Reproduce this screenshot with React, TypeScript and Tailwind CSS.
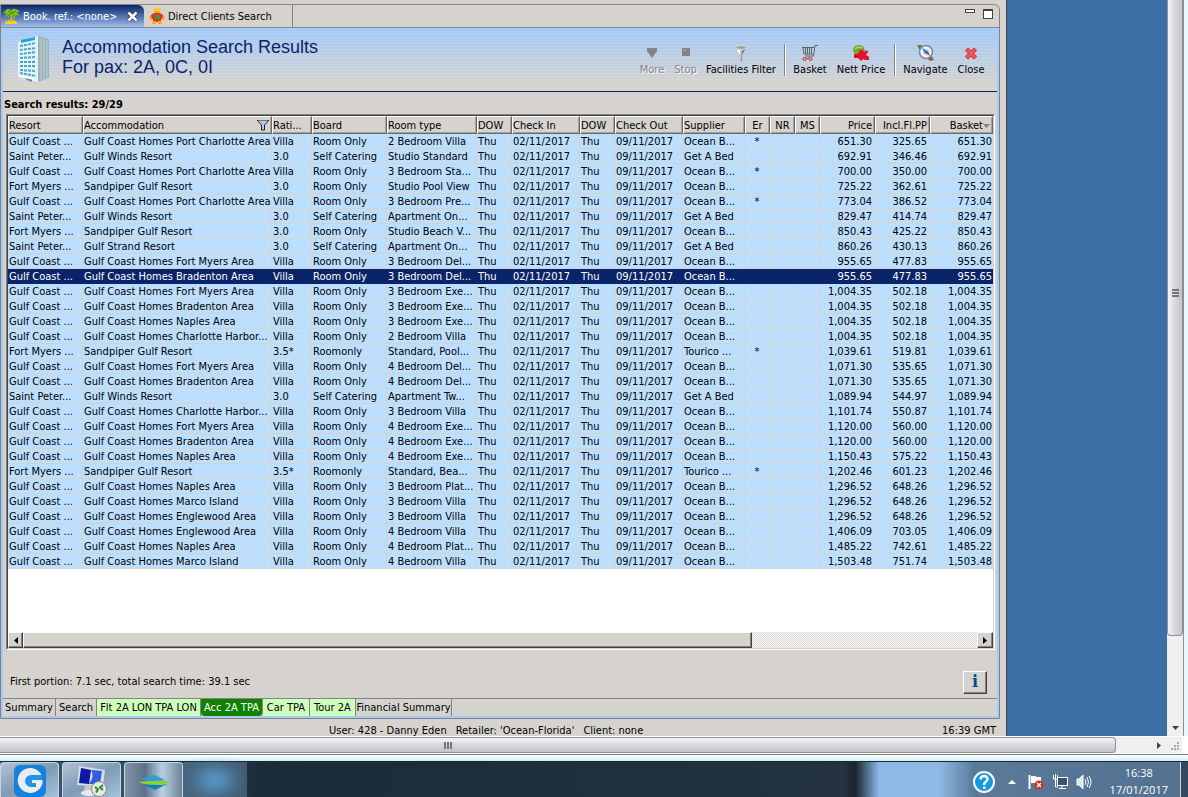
import { useState } from "react";

const columns = [
  { label: "Resort", width: 75, align: "left" },
  { label: "Accommodation", width: 189, align: "left" },
  { label: "Rati...", width: 40, align: "left" },
  { label: "Board", width: 75, align: "left" },
  { label: "Room type", width: 90, align: "left" },
  { label: "DOW", width: 35, align: "left" },
  { label: "Check In", width: 68, align: "left" },
  { label: "DOW", width: 35, align: "left" },
  { label: "Check Out", width: 68, align: "left" },
  { label: "Supplier", width: 62, align: "left" },
  { label: "Er", width: 25, align: "center" },
  { label: "NR", width: 25, align: "center" },
  { label: "MS", width: 25, align: "center" },
  { label: "Price", width: 55, align: "right" },
  { label: "Incl.Fl.PP", width: 55, align: "right" },
  { label: "Basket", width: 63, align: "right" },
];

const GC = "Gulf Coast ...";
const SP = "Saint Peter...";
const FM = "Fort Myers ...";
const RO = "Room Only";
const SC = "Self Catering";
const OB = "Ocean B...";
const GB = "Get A Bed";
const TO = "Tourico ...";

// resort, accommodation, rating, board, room, supplier, er, price, per person
const results = [
  [GC, "Gulf Coast Homes Port Charlotte Area", "Villa", RO, "2 Bedroom Villa", OB, "*", "651.30", "325.65"],
  [SP, "Gulf Winds Resort", "3.0", SC, "Studio Standard", GB, "", "692.91", "346.46"],
  [GC, "Gulf Coast Homes Port Charlotte Area", "Villa", RO, "3 Bedroom Sta...", OB, "*", "700.00", "350.00"],
  [FM, "Sandpiper Gulf Resort", "3.0", RO, "Studio Pool View", OB, "", "725.22", "362.61"],
  [GC, "Gulf Coast Homes Port Charlotte Area", "Villa", RO, "3 Bedroom Pre...", OB, "*", "773.04", "386.52"],
  [SP, "Gulf Winds Resort", "3.0", SC, "Apartment On...", GB, "", "829.47", "414.74"],
  [FM, "Sandpiper Gulf Resort", "3.0", RO, "Studio Beach V...", OB, "", "850.43", "425.22"],
  [SP, "Gulf Strand Resort", "3.0", SC, "Apartment On...", GB, "", "860.26", "430.13"],
  [GC, "Gulf Coast Homes Fort Myers Area", "Villa", RO, "3 Bedroom Del...", OB, "", "955.65", "477.83"],
  [GC, "Gulf Coast Homes Bradenton Area", "Villa", RO, "3 Bedroom Del...", OB, "", "955.65", "477.83"],
  [GC, "Gulf Coast Homes Fort Myers Area", "Villa", RO, "3 Bedroom Exe...", OB, "", "1,004.35", "502.18"],
  [GC, "Gulf Coast Homes Bradenton Area", "Villa", RO, "3 Bedroom Exe...", OB, "", "1,004.35", "502.18"],
  [GC, "Gulf Coast Homes Naples Area", "Villa", RO, "3 Bedroom Exe...", OB, "", "1,004.35", "502.18"],
  [GC, "Gulf Coast Homes Charlotte Harbor...", "Villa", RO, "2 Bedroom Villa", OB, "", "1,004.35", "502.18"],
  [FM, "Sandpiper Gulf Resort", "3.5*", "Roomonly", "Standard, Pool...", TO, "*", "1,039.61", "519.81"],
  [GC, "Gulf Coast Homes Fort Myers Area", "Villa", RO, "4 Bedroom Del...", OB, "", "1,071.30", "535.65"],
  [GC, "Gulf Coast Homes Bradenton Area", "Villa", RO, "4 Bedroom Del...", OB, "", "1,071.30", "535.65"],
  [SP, "Gulf Winds Resort", "3.0", SC, "Apartment Tw...", GB, "", "1,089.94", "544.97"],
  [GC, "Gulf Coast Homes Charlotte Harbor...", "Villa", RO, "3 Bedroom Villa", OB, "", "1,101.74", "550.87"],
  [GC, "Gulf Coast Homes Fort Myers Area", "Villa", RO, "4 Bedroom Exe...", OB, "", "1,120.00", "560.00"],
  [GC, "Gulf Coast Homes Bradenton Area", "Villa", RO, "4 Bedroom Exe...", OB, "", "1,120.00", "560.00"],
  [GC, "Gulf Coast Homes Naples Area", "Villa", RO, "4 Bedroom Exe...", OB, "", "1,150.43", "575.22"],
  [FM, "Sandpiper Gulf Resort", "3.5*", "Roomonly", "Standard, Bea...", TO, "*", "1,202.46", "601.23"],
  [GC, "Gulf Coast Homes Naples Area", "Villa", RO, "3 Bedroom Plat...", OB, "", "1,296.52", "648.26"],
  [GC, "Gulf Coast Homes Marco Island", "Villa", RO, "3 Bedroom Villa", OB, "", "1,296.52", "648.26"],
  [GC, "Gulf Coast Homes Englewood Area", "Villa", RO, "3 Bedroom Villa", OB, "", "1,296.52", "648.26"],
  [GC, "Gulf Coast Homes Englewood Area", "Villa", RO, "4 Bedroom Villa", OB, "", "1,406.09", "703.05"],
  [GC, "Gulf Coast Homes Naples Area", "Villa", RO, "4 Bedroom Plat...", OB, "", "1,485.22", "742.61"],
  [GC, "Gulf Coast Homes Marco Island", "Villa", RO, "4 Bedroom Villa", OB, "", "1,503.48", "751.74"],
];

const alignClass: Record<string, string> = {
  left: "text-left pl-px",
  center: "text-center",
  right: "text-right pr-[2px]",
};

const raised =
  "border border-t-white border-l-white border-b-[#404040] border-r-[#404040] shadow-[inset_-1px_-1px_0_#848284] bg-[#d6d3ce]";

const PalmIcon = () => (
  <svg width="16" height="16" viewBox="0 0 16 16" className="shrink-0">
    <path d="M1 14q6-4 12 0v2H1z" fill="#f5d21f" />
    <path d="M7 5h2l-1 4 1 5H6l1-5z" fill="#e8b020" />
    <path d="M7 3Q5-1 2 2 0 3 0 6l3-1-2 4 4-2-1 4 4-5 2 5 2-2 0-2 3 1-2-4h3Q14 1 11 1 8 0 7 3z" fill="#7cc21a" />
    <path d="M8 5L4 3M8 5L4 8M8 5l4-2M8 5l4 4" stroke="#3f8f12" />
  </svg>
);

const ClientIcon = () => (
  <svg width="16" height="16" viewBox="0 0 16 16" className="shrink-0">
    <path d="M5 0h6l1 3H4z" fill="#f7d117" />
    <path d="M5 3h6v3H5z" fill="#ffa03c" />
    <path d="M2 7l3-2h6l3 2 1 4h-3v3H4v-3H1z" fill="#e8301c" />
    <path d="M0 9h3v3H1zM13 9h3l-1 3h-2zM4 13h3v3H3zM9 13h3l1 3H9z" fill="#f5a81a" />
    <path d="M6 7h5v4H6z" fill="#2aa43a" />
  </svg>
);

const BuildingIcon = () => (
  <svg width="36" height="48" viewBox="0 0 36 48" className="shrink-0">
    <path d="M3 7L23 1v46L3 42z" fill="#e8f2f6" />
    <path d="M23 1l11 3v39l-11 4z" fill="#9bb3ba" />
    <path d="M26 3v42M29 4v40M32 5v38" stroke="#c0d2d7" />
    <path d="M6 5l14-3v3L6 8z" fill="#21a5dc" />
    <path
      d="M5 11l16-3M5 15l16-2M5 19l16-2M5 23l16-1M5 27h16M5 31h16M5 35l16 1M5 38l16 3"
      stroke="#42a7cf"
      strokeWidth="2"
      strokeDasharray="3 1"
    />
    <path d="M8 41l9 2v4l-5-2z" fill="#768b94" />
    <path d="M6 40l13 3v2L6 42z" fill="#fff" />
  </svg>
);

const FunnelIcon = () => (
  <svg width="16" height="16" viewBox="0 0 16 16">
    <path d="M2 2l5 8v6h3v-6l4-8z" fill="#c4c4c4" />
    <path d="M9 5l4-2-4 7v6H8z" fill="#848484" />
    <ellipse cx="8" cy="2.500" rx="5.500" ry="2" fill="#a4a4a4" stroke="#dedede" />
    <path d="M4 5l3 5V5z" fill="#fff" />
  </svg>
);

const CartIcon = () => (
  <svg width="16" height="16" viewBox="0 0 16 16" fill="none">
    <path d="M16 .5h-3L11.500 11H3M0 2.500h12M1 3l1 6h10M3.500 3v6M5.500 3v6M7.500 3v6M9.500 3v6" stroke="#5f6468" />
    <circle cx="2.500" cy="14" r="1.500" stroke="#e01b24" />
    <circle cx="8.500" cy="14" r="1.500" stroke="#e01b24" />
    <path d="M4 12.500l1 1.500 2-1.500" stroke="#e01b24" />
  </svg>
);

const NettIcon = () => (
  <svg width="16" height="16" viewBox="0 0 16 16">
    <path d="M0 6Q0 0 6 0q5 0 6 6l-4 3H2z" fill="#74a52c" />
    <path d="M2 4q3-3 7-1" stroke="#b4d678" strokeWidth="1.500" fill="none" />
    <path d="M1 9h4l2-4h3l1 2 3-2 1 2-2 3 3 2v3h-4l-2-1-2 2-3-3H1z" fill="#e3122d" />
    <path d="M2 11h3v1H2z" fill="#901" />
  </svg>
);

const CompassIcon = () => (
  <svg width="17" height="17" viewBox="0 0 17 17">
    <path d="M0 1h4l4 3-4 4-2-3zM10 14l4-3 3 5-4 1z" fill="#86694a" />
    <circle cx="9" cy="8" r="6.500" fill="#dcebf4" stroke="#6d8da3" strokeWidth="1.500" />
    <circle cx="9" cy="8" r="4.500" fill="none" stroke="#fff" />
    <path d="M5 4l6 3-3 3z" fill="#1c8ad0" />
    <path d="M13 12L8 9l3-2z" fill="#dc2b2b" />
  </svg>
);

const CloseIcon = () => (
  <svg width="14" height="16" viewBox="0 0 14 16">
    <path d="M2.500 4l9 9M11.500 4l-9 9" stroke="#c0303a" strokeWidth="4.500" />
    <path d="M3 4.500l8 8M11 4.500l-8 8" stroke="#f0545c" strokeWidth="3" />
  </svg>
);

const MoreIcon = () => (
  <svg width="16" height="16" viewBox="0 0 16 16">
    <path d="M3 3h10v3l-5 7-5-7z" fill="#848284" />
  </svg>
);

const StopIcon = () => (
  <svg width="16" height="16" viewBox="0 0 16 16">
    <path d="M4 3h8v8H4z" fill="#848284" />
    <path d="M6 5.500h2" stroke="#bbb" />
  </svg>
);

type ToolProps = { label: string; icon: React.ReactNode; className: string; disabled?: boolean };

const ToolButton = ({ label, icon, className, disabled }: ToolProps) => (
  <button
    disabled={disabled}
    className={`flex flex-col items-center whitespace-nowrap ${className} ${
      disabled ? "text-[#848284] [text-shadow:1px_1px_0_#fff]" : "text-black"
    }`}
  >
    <span className="h-[17px] flex items-center">{icon}</span>
    <span className="leading-[18px]">{label}</span>
  </button>
);

const Separator = () => <div className="w-[2px] h-8 bg-[#848284] border-r border-white" />;

const TitleTabs = () => (
  <div className="flex h-[23px] border-b border-[#848284] rounded-tr-md">
    <button className="flex items-center w-[143px] pl-[3px] text-white rounded-tr-md bg-linear-to-b from-[#0a246a] to-[#a0c0f0]">
      <PalmIcon />
      <span className="ml-[3px] pt-[2px] whitespace-nowrap">Book. ref.: &lt;none&gt;</span>
      <svg width="11" height="11" viewBox="0 0 11 11" className="ml-auto mr-[6px]">
        <path d="M1.500 1.500l8 8M9.500 1.500l-8 8" stroke="#333" strokeWidth="4" />
        <path d="M1.500 1.500l8 8M9.500 1.500l-8 8" stroke="#fff" strokeWidth="2.500" />
      </svg>
    </button>
    <button className="flex items-center w-[149px] pl-[5px] border-r border-[#848284]">
      <ClientIcon />
      <span className="ml-[3px] pt-[2px] whitespace-nowrap">Direct Clients Search</span>
    </button>
    <div className="ml-auto mr-[6px] mt-1 flex gap-2 items-start">
      <button aria-label="Minimize" className="w-[10px] h-1 border border-[#404040] bg-white" />
      <button aria-label="Maximize" className="w-[10px] h-[10px] border border-t-2 border-[#404040] bg-white" />
    </div>
  </div>
);

const PageHeader = () => (
  <header className="flex h-16 border-b border-[#0a246a] bg-[repeating-linear-gradient(180deg,rgba(255,255,255,0.1)_0_1px,transparent_1px_3px),linear-gradient(180deg,#a3c9f9,#d6d3ce_92%)]">
    <div className="pl-3 pt-[7px]">
      <BuildingIcon />
    </div>
    <h1 className="ml-[11px] mt-[9px] text-[18px] leading-5 text-[#0a246a] font-[Liberation_Sans,sans-serif] whitespace-nowrap">
      Accommodation Search Results
      <br />
      For pax: 2A, 0C, 0I
    </h1>
    <div className="ml-auto mr-[7px] mt-4 flex items-start">
      <ToolButton label="More" icon={<MoreIcon />} className="w-[34px]" disabled />
      <ToolButton label="Stop" icon={<StopIcon />} className="w-[33px]" disabled />
      <ToolButton label="Facilities Filter" icon={<FunnelIcon />} className="w-[78px] mr-1" />
      <Separator />
      <ToolButton label="Basket" icon={<CartIcon />} className="w-[42px] ml-[3px]" />
      <ToolButton label="Nett Price" icon={<NettIcon />} className="w-[60px] mr-[3px]" />
      <Separator />
      <ToolButton label="Navigate" icon={<CompassIcon />} className="w-[53px] ml-[3px]" />
      <ToolButton label="Close" icon={<CloseIcon />} className="w-[38px]" />
    </div>
  </header>
);

const ResultsTable = () => {
  const [selected, setSelected] = useState(9);

  return (
    <table className="w-full table-fixed border-separate border-spacing-0">
      <colgroup>
        {columns.map((col, i) => (
          <col key={i} style={{ width: col.width }} />
        ))}
      </colgroup>
      <thead>
        <tr>
          {columns.map((col, i) => (
            <th
              key={i}
              className={`h-[18px] p-0 pt-[2px] font-normal leading-[14px] whitespace-nowrap overflow-hidden bg-[#d6d3ce] border border-t-white border-l-white border-r-[#6b6966] border-b-[#6b6966] shadow-[inset_-1px_-1px_0_#a5a29d] ${
                col.align === "left" ? "text-left" : col.align === "center" ? "text-center" : "text-right pr-[2px]"
              }`}
            >
              {col.label === "Accommodation" ? (
                <span className="flex items-center justify-between">
                  {col.label}
                  <svg width="14" height="12" viewBox="0 0 14 12" className="mr-px">
                    <path d="M1 0h12L8.500 5v5h-3V5z" fill="#b9c8ea" stroke="#222" />
                  </svg>
                </span>
              ) : col.label === "Basket" ? (
                <span className="flex items-center justify-end">
                  {col.label}
                  <svg width="7" height="4" viewBox="0 0 7 4">
                    <path d="M0 0h7L3.500 4z" fill="#848284" />
                  </svg>
                </span>
              ) : (
                col.label
              )}
            </th>
          ))}
        </tr>
      </thead>
      <tbody>
        {results.map(([resort, name, rating, board, room, supplier, er, price, pp], row) => (
          <tr
            key={row}
            onClick={() => setSelected(row)}
            className={row === selected ? "bg-[#0a246a] text-white" : "bg-[#bddfff] text-black"}
          >
            {[resort, name, rating, board, room, "Thu", "02/11/2017", "Thu", "09/11/2017", supplier, er, "", "", price, pp, price].map(
              (cell, i) => (
                <td
                  key={i}
                  className={`h-[15px] p-0 pt-[2px] leading-3 whitespace-nowrap overflow-hidden border-b border-r ${
                    row === selected ? "border-[#0a246a]" : "border-[#d6d3ce]"
                  } ${i === 15 ? "text-right pr-px border-r-0" : alignClass[columns[i].align]}`}
                >
                  {cell}
                </td>
              )
            )}
          </tr>
        ))}
      </tbody>
    </table>
  );
};

const TableScrollbar = () => (
  <div className="flex h-4 bg-[repeating-conic-gradient(#fff_0_25%,#d6d3ce_0_50%)] bg-size-[2px_2px]">
    <button aria-label="Scroll left" className={`w-[15px] flex items-center justify-center ${raised}`}>
      <svg width="4" height="7" viewBox="0 0 4 7">
        <path d="M4 0v7L0 3.500z" />
      </svg>
    </button>
    <div className={`w-[74%] ${raised}`} />
    <button aria-label="Scroll right" className={`ml-auto w-4 flex items-center justify-center ${raised}`}>
      <svg width="4" height="7" viewBox="0 0 4 7">
        <path d="M0 0v7l4-3.500z" />
      </svg>
    </button>
  </div>
);

const bottomTabs = [
  { label: "Summary", className: "w-[53px]" },
  { label: "Search", className: "w-[41px]" },
  { label: "Flt 2A LON TPA LON", className: "w-[104px] bg-[#ceffbd]" },
  { label: "Acc 2A TPA", className: "w-[62px] bg-[#108200] text-white rounded-b-sm" },
  { label: "Car TPA", className: "w-[47px] bg-[#ceffbd]" },
  { label: "Tour 2A", className: "w-[46px] bg-[#ceffbd]" },
  { label: "Financial Summary", className: "w-[96px]" },
];

const BookingWindow = () => (
  <div className="flex-1 min-w-0 flex flex-col bg-[#d6d3ce] border-r border-[#404040] pt-1 pr-[6px]">
    <div className="flex-1 min-h-0 flex flex-col border border-[#848284] rounded-tr-md">
      <TitleTabs />
      <div className="flex-1 flex flex-col border-x-2 border-b-2 border-[#a5cbf7]">
        <PageHeader />
        <h2 className="h-[22px] pt-[5px] pl-px font-bold leading-4">Search results: 29/29</h2>
        <div className="ml-[3px] mr-[2px] border border-t-[#848284] border-l-[#848284] border-white">
          <div className="h-[534px] flex flex-col justify-between border border-t-[#404040] border-l-[#404040] border-[#d6d3ce] bg-white">
            <ResultsTable />
            <TableScrollbar />
          </div>
        </div>
        <div className="flex-1 flex items-center justify-between pl-[7px] pr-[10px] pt-4">
          <p>First portion: 7.1 sec, total search time: 39.1 sec</p>
          <button
            aria-label="Information"
            className={`w-6 h-[23px] text-[16px] leading-5 font-bold text-[#004a94] font-[DejaVu_Serif,serif] ${raised}`}
          >
            i
          </button>
        </div>
        <nav className="flex h-[18px] border-t border-[#848284]">
          {bottomTabs.map((tab) => (
            <button key={tab.label} className={`border-r border-[#848284] whitespace-nowrap leading-4 ${tab.className}`}>
              {tab.label}
            </button>
          ))}
        </nav>
      </div>
    </div>
    <footer className="h-[17px] flex items-end gap-[9px] pl-[329px] pr-[4px] leading-[10px] whitespace-nowrap">
      <span>User: 428 - Danny Eden</span>
      <span>Retailer: 'Ocean-Florida'</span>
      <span>Client: none</span>
      <span className="ml-auto">16:39 GMT</span>
    </footer>
  </div>
);

const VerticalScrollbar = () => (
  <div className="w-4 flex flex-col bg-[#efeff0]">
    <div className="flex-1 flex items-center justify-center border border-t-0 border-[#8e8f93] rounded-b-sm bg-linear-to-r from-[#f5f5f6] via-[#d8d8dc] to-[#c2c3c8]">
      <svg width="7" height="8" viewBox="0 0 7 8" className="mt-[-50px]">
        <path d="M0 1h7M0 4h7M0 7h7" stroke="#555" strokeWidth="1.500" />
      </svg>
    </div>
    <button aria-label="Scroll down" className="h-[100px] flex items-end justify-center pb-[6px]">
      <svg width="7" height="4" viewBox="0 0 7 4">
        <path d="M0 0h7L3.500 4z" fill="#404040" />
      </svg>
    </button>
  </div>
);

const HorizontalScrollbar = () => (
  <div className="h-[17px] mr-[5px] flex border-t border-r border-white bg-[#efeff0]">
    <div className="flex-1 flex items-center justify-center pr-[220px] border border-l-0 border-[#8e8f93] rounded-r-sm bg-linear-to-b from-[#f5f5f6] via-[#d8d8dc] to-[#c2c3c8]">
      <svg width="8" height="7" viewBox="0 0 8 7">
        <path d="M1 0v7M4 0v7M7 0v7" stroke="#555" strokeWidth="1.500" />
      </svg>
    </div>
    <button aria-label="Scroll right" className="w-[49px] flex items-center justify-end pr-[4px]">
      <svg width="4" height="7" viewBox="0 0 4 7">
        <path d="M0 0v7l4-3.500z" fill="#404040" />
      </svg>
    </button>
    <div className="w-[17px] flex items-end justify-end p-[2px]">
      <svg width="9" height="9" viewBox="0 0 9 9" fill="#a8a8a8">
        <path d="M6 0h2v2H6zM3 3h2v2H3zM6 3h2v2H6zM0 6h2v2H0zM3 6h2v2H3zM6 6h2v2H6z" />
      </svg>
    </div>
  </div>
);

const taskButton =
  "h-full flex items-start justify-center pt-[2px] border border-b-0 border-[#c6d5e2] rounded-t-sm bg-linear-to-br from-[#b4c4d2] via-[#7f9bb3] to-[#a5c3dc]";

const Taskbar = () => (
  <div className="h-9 flex items-stretch border-t border-[#1b2733] bg-[linear-gradient(90deg,#3c5a75_0,#30485d_15%,#1c2b3a_22%,#1e2e3d_45%,#24333f_71%,#182430_72%,#8db9e6_74%,#8fb9e5_79%,#5a7a9b_82%,#54718f_100%)]">
    <button aria-label="Cloud client" className={`w-[59px] ${taskButton}`}>
      <svg width="32" height="32" viewBox="0 0 32 32">
        <rect width="32" height="32" rx="6" fill="#1681dc" />
        <path d="M27 9A12.500 12.500 0 1 0 28.500 18H28v-4H19v-3h8z" fill="#e9edf0" />
        <path d="M28 10H17a6 6 0 0 0 0 12h5v-4h-4v-3h10.500z" fill="#2492e4" />
        <path d="M18 15h10.500v3H18z" fill="#e9edf0" />
      </svg>
    </button>
    <button aria-label="Remote Desktop" className={`w-[59px] ml-[3px] ${taskButton}`}>
      <svg width="32" height="32" viewBox="0 0 32 32">
        <path d="M3 1l26 4-2 17L1 20z" fill="#d8dde0" />
        <path d="M5 3l10 2-2 14-10-1z" fill="#0d16a5" />
        <path d="M5 3l10 2 11 1-2 13-11 0q6-8 2-14z" fill="#2f5ee0" />
        <path d="M9 20h8l2 6H8z" fill="#c5c9cc" />
        <ellipse cx="13" cy="28" rx="8" ry="3" fill="#e8eaeb" />
        <circle cx="23" cy="24" r="7.500" fill="#e8e8e6" stroke="#888" />
        <path d="M19 22l3 2.500-2 3M27 20l-3 2.500 3 2.500" fill="none" stroke="#2c8a2c" strokeWidth="2" />
      </svg>
    </button>
    <button
      aria-label="Travel app"
      className="w-[59px] ml-[3px] flex items-start justify-center pt-[2px] border border-b-0 border-[#c6d5e2] rounded-t-sm bg-[linear-gradient(90deg,#8496a6,#5b7189_35%,#b9cfe2_65%,#6d8296)]"
    >
      <svg width="32" height="32" viewBox="0 0 32 32">
        <path d="M3 14l14-4 10 5-12 2z" fill="#2f9ce0" />
        <path d="M5 19h24l-12 6z" fill="#157cc6" />
        <path d="M0 17q16-2 31-1l-5 4q-14 0-20-1z" fill="#84d62c" />
      </svg>
    </button>
    <div className="w-16 flex items-center justify-center bg-[#5c7a96]/60">
      <div className="w-9 h-5 rounded-full bg-[#5a9fd0] blur-sm" />
    </div>
    <div className="ml-auto flex items-center">
      <button aria-label="Help" className="mt-1">
        <svg width="22" height="22" viewBox="0 0 22 22">
          <circle cx="11" cy="11" r="10" fill="#1499e0" stroke="#fff" strokeWidth="2" />
          <path d="M7.500 8.500Q8 5 11 5t3.500 3Q14.500 10 12 11.500 11 12 11 14" fill="none" stroke="#fff" strokeWidth="2.500" />
          <path d="M10 15.500h2.500V18H10z" fill="#fff" />
        </svg>
      </button>
      <button aria-label="Show hidden icons" className="ml-[13px] mt-1">
        <svg width="8" height="4" viewBox="0 0 8 4">
          <path d="M0 4h8L4 0z" fill="#fff" />
        </svg>
      </button>
      <button aria-label="Action Center" className="ml-3 mt-1">
        <svg width="16" height="16" viewBox="0 0 16 16">
          <path d="M1.500 1v14" stroke="#fff" strokeWidth="2" />
          <path d="M3 2h4l2 1h4v7H8L7 9H3z" fill="#fff" />
          <circle cx="11" cy="11" r="4.500" fill="#d52b1e" />
          <path d="M9 9l4 4M13 9l-4 4" stroke="#fff" strokeWidth="1.500" />
        </svg>
      </button>
      <button aria-label="Network" className="ml-2 mt-1">
        <svg width="16" height="16" viewBox="0 0 16 16" fill="none" stroke="#fff">
          <path d="M1.500 1v4h4V1M3.500 0v5M3.500 5v8H6" />
          <rect x="5.500" y="3.500" width="10" height="8" fill="#3c5268" />
          <path d="M7 14.500h7M10 12v2" />
        </svg>
      </button>
      <button aria-label="Volume" className="ml-2 mt-1">
        <svg width="16" height="16" viewBox="0 0 16 16" fill="none" stroke="#fff">
          <path d="M1 5h2l4-4v14l-4-4H1z" fill="#dfe6ec" />
          <path d="M9 5q2 3 0 6M11 3q3 5 0 10M13 2q4 6 0 12" />
        </svg>
      </button>
      <div className="ml-[18px] mr-3 pt-[2px] text-[11px] leading-[17px] text-center text-white font-[Open_Sans,sans-serif]">
        <div>16:38</div>
        <div>17/01/2017</div>
      </div>
      <button aria-label="Show desktop" className="w-2 self-stretch border-l border-[#c6d5e2] bg-[#34495e]" />
    </div>
  </div>
);

export default function App() {
  return (
    <div className="h-screen flex flex-col overflow-hidden bg-white text-black text-[11px] font-[DejaVu_Sans_Condensed,Noto_Sans,sans-serif]">
      <div className="flex-1 min-h-0 flex">
        <BookingWindow />
        <div className="w-[160px] bg-[#3a6ea5]" />
        <VerticalScrollbar />
        <div className="w-[5px] border-l border-[#8e8f93] bg-[#eaf8fb]" />
      </div>
      <HorizontalScrollbar />
      <div className="h-[7px] mt-px border-t border-[#7b7d80] bg-linear-to-b from-white to-[#cdeff5]" />
      <Taskbar />
    </div>
  );
}
